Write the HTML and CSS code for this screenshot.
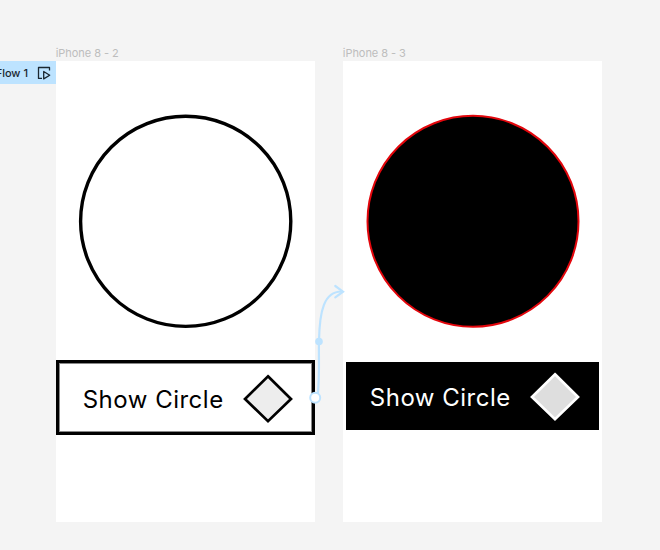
FILE: index.html
```
<!DOCTYPE html>
<html lang="en">
<head>
    <meta charset="UTF-8">
    <meta name="viewport" content="width=device-width, initial-scale=1.0">
    <title>Show Circle</title>
    <link rel="stylesheet" href="styles.css">
</head>
<body>
    <div class="canvas">
        <div class="flow">
            <span>Flow 1</span>
            <svg width="14" height="14" viewBox="0 0 14 14">
                <path d="M5 12.4H1.5V1.5H12.5V4.5M6.7 5.5V12.9L12.7 9.2Z"/>
            </svg>
        </div>

        <div class="frame frame-off">
            <div class="frame-name">iPhone 8 - 2</div>
            <div class="screen">
                <svg class="circle" width="214" height="214" viewBox="0 0 214 214">
                    <circle cx="107.7" cy="107.3" r="105.1"/>
                </svg>
                <div class="button">
                    <span class="button-text">Show Circle</span>
                    <svg class="diamond" width="52" height="50" viewBox="0 0 52 50">
                        <path d="M26 2.3L49 25L26 47.2L3 25Z"/>
                    </svg>
                </div>
            </div>
        </div>

        <div class="frame frame-on">
            <div class="frame-name">iPhone 8 - 3</div>
            <div class="screen">
                <svg class="circle" width="214" height="214" viewBox="0 0 214 214">
                    <circle cx="107" cy="107.3" r="105.5"/>
                </svg>
                <div class="button">
                    <span class="button-text">Show Circle</span>
                    <svg class="diamond" width="52" height="50" viewBox="0 0 52 50">
                        <path d="M26 2.3L49 25L26 47.2L3 25Z"/>
                    </svg>
                </div>
            </div>
        </div>

        <!-- prototype connection between the two frames -->
        <svg class="connection" width="50" height="130" viewBox="300 280 50 130">
            <path d="M317.5 398C320 375 318.5 355 319 341C319.5 311 324 291 342 291.5"/>
            <path d="M335.3 286L343 291.7L335.3 297.3"/>
            <circle class="handle" cx="319" cy="341.5" r="3.8"/>
            <circle class="start" cx="315.2" cy="397.8" r="5"/>
        </svg>
    </div>
</body>
</html>
```
FILE: styles.css
```
body {
    margin: 0;
    background-color: #f4f4f4;
    font-family: Inter, 'Liberation Sans', sans-serif;
}

.canvas {
    position: relative;
    width: 660px;
    height: 550px;
    overflow: hidden;
}

.flow {
    position: absolute;
    left: -20px;
    top: 61px;
    width: 76px;
    height: 23px;
    box-sizing: border-box;
    padding-right: 5px;
    display: flex;
    align-items: center;
    justify-content: flex-end;
    gap: 9px;
    background-color: #bde3ff;
    color: #1b2730;
    font-size: 11px;
    font-weight: 500;
    white-space: nowrap;
}

.flow svg {
    fill: none;
    stroke: #1b2730;
    stroke-width: 1.3;
    stroke-linejoin: round;
}

.frame {
    position: absolute;
    top: 45px;
    width: 259.5px;
}

.frame-off {
    left: 55.7px;
}

.frame-on {
    left: 342.8px;
}

.frame-name {
    height: 16px;
    line-height: 17px;
    font-size: 11px;
    letter-spacing: -0.05px;
    color: #bdbdbd;
}

.screen {
    height: 461px;
    box-sizing: border-box;
    padding-top: 53px;
    display: flex;
    flex-direction: column;
    align-items: center;
    background-color: white;
}

.circle {
    flex-shrink: 0;
    overflow: visible;
}

.circle circle {
    fill: white;
    stroke: black;
    stroke-width: 3.4;
}

.button {
    width: 100%;
    height: 75px;
    box-sizing: border-box;
    margin-top: 32px;
    padding: 3px 18px 0 24px;
    display: flex;
    align-items: center;
    justify-content: space-between;
    border: 3px solid black;
    box-shadow: inset 0 0 0 1px #888;
}

.button-text {
    font-size: 24px;
    letter-spacing: 0.5px;
    white-space: nowrap;
}

.diamond path {
    fill: #ededed;
    stroke: black;
    stroke-width: 2.7;
}

.frame-on .circle circle {
    fill: black;
    stroke: #e3060c;
    stroke-width: 2;
}

.frame-on .button {
    width: 252.5px;
    height: 68px;
    margin-top: 34.4px;
    padding: 2px 18px 0 23.5px;
    border: none;
    box-shadow: none;
    background-color: black;
    color: white;
}

.frame-on .diamond path {
    fill: #dedede;
    stroke: white;
}

.connection {
    position: absolute;
    left: 300px;
    top: 280px;
    fill: none;
    stroke: #bde3ff;
    stroke-width: 2.2;
    stroke-linecap: round;
}

.connection .handle {
    fill: #bde3ff;
    stroke: none;
}

.connection .start {
    fill: white;
    stroke-width: 2;
}
```
